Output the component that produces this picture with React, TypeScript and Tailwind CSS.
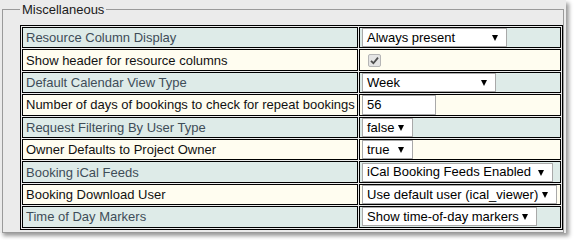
import type { ReactNode } from 'react'

type Fila = {
  etiqueta: string
  valor: ReactNode
}

function Flecha() {
  return (
    <svg width="6" height="7" viewBox="0 0 6 7" className="shrink-0">
      <polygon points="0,1 6,1 3,7" fill="#000" />
    </svg>
  )
}

function Selector({ texto, ancho }: { texto: string; ancho: string }) {
  return (
    <div
      className={`flex h-[19px] items-center justify-between border border-[#a9a9a9] bg-white pl-[4px] pr-[8px] text-black ${ancho}`}
    >
      <span className="whitespace-nowrap">{texto}</span>
      <Flecha />
    </div>
  )
}

function Casilla() {
  return (
    <span className="ml-[6px] flex h-[13px] w-[13px] items-center justify-center rounded-[2px] border border-[#b5b5b5] bg-[#e4e4e4]">
      <svg width="9" height="9" viewBox="0 0 9 9">
        <path d="M1 4.8 L3.4 7.2 L8 1.6" fill="none" stroke="#4d4d4d" strokeWidth="1.8" />
      </svg>
    </span>
  )
}

const filas: Fila[] = [
  { etiqueta: 'Resource Column Display', valor: <Selector texto="Always present" ancho="w-[145px]" /> },
  { etiqueta: 'Show header for resource columns', valor: <Casilla /> },
  { etiqueta: 'Default Calendar View Type', valor: <Selector texto="Week" ancho="w-[134px]" /> },
  {
    etiqueta: 'Number of days of bookings to check for repeat bookings',
    valor: (
      <div className="flex h-[20px] w-[74px] items-center border border-[#a9a9a9] bg-white pl-[4px] text-black">56</div>
    ),
  },
  { etiqueta: 'Request Filtering By User Type', valor: <Selector texto="false" ancho="w-[51px]" /> },
  { etiqueta: 'Owner Defaults to Project Owner', valor: <Selector texto="true" ancho="w-[51px]" /> },
  { etiqueta: 'Booking iCal Feeds', valor: <Selector texto="iCal Booking Feeds Enabled" ancho="w-[191px]" /> },
  { etiqueta: 'Booking Download User', valor: <Selector texto="Use default user (ical_viewer)" ancho="w-[195px]" /> },
  { etiqueta: 'Time of Day Markers', valor: <Selector texto="Show time-of-day markers" ancho="w-[175px]" /> },
]

export default function App() {
  return (
    <div className="h-[240px] w-[575px] bg-white font-['Liberation_Sans',Arial,sans-serif] text-[13px]">
      <div className="h-[233px] w-[566px] bg-[#ebebeb] pt-[2px] shadow-[3px_3px_4px_rgba(0,0,0,0.4)]">
        <fieldset className="ml-[2px] w-[562px] border border-[#9a9a9a] pb-[2px] pl-[17px] pt-[8px]">
          <legend className="px-[2px] leading-[15px] text-[#1a1a1a]">Miscellaneous</legend>
          <table className="w-[543px] table-fixed border-separate border-spacing-[1px] border border-black">
            <tbody>
              {filas.map((f, i) => {
                const impar = i % 2 === 0
                return (
                  <tr key={f.etiqueta} className={impar ? 'bg-[#deebe8]' : 'bg-[#fffdf0]'}>
                    <td
                      className={`h-[21.4px] w-[336px] whitespace-nowrap border border-black py-0 pl-[3px] pr-0 leading-[17px] ${
                        impar ? 'text-[#3f4d58]' : 'text-[#111]'
                      }`}
                    >
                      {f.etiqueta}
                    </td>
                    <td className="h-[21.4px] border border-black px-[2px] py-0">
                      <div className="flex h-[19px] items-center">{f.valor}</div>
                    </td>
                  </tr>
                )
              })}
            </tbody>
          </table>
        </fieldset>
      </div>
    </div>
  )
}
